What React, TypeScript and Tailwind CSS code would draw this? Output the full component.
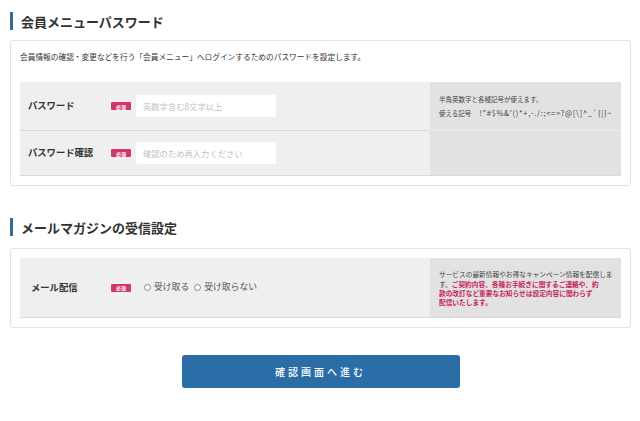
import React from "react";

const FONT = "font-['Noto_Sans_CJK_JP','Noto_Sans',sans-serif]";

function SectionHeading({ children, className = "" }: { children: React.ReactNode; className?: string }) {
  return (
    <h2
      className={`flex h-[18px] items-center border-l-[3px] border-[#2f6c9b] pl-[8px] text-[13px] font-bold leading-none text-[#333] ${className}`}
    >
      {children}
    </h2>
  );
}

function Required() {
  return (
    <span className="flex h-[8px] w-[20px] shrink-0 items-center justify-center rounded-[1px] bg-[#cf366a] text-[5px] font-bold leading-none text-white">
      必須
    </span>
  );
}

function TextField({ placeholder }: { placeholder: string }) {
  return (
    <div className="ml-[5px] flex h-[22px] w-[140px] items-center rounded-[2px] bg-white pl-[7px] text-[8.3px] leading-none text-[#c2c2c2]">
      {placeholder}
    </div>
  );
}

function Radio({ label }: { label: string }) {
  return (
    <span className="flex items-center gap-[3px] text-[8.8px] leading-none text-[#555]">
      <span className="h-[7px] w-[7px] rounded-full border border-[#888] bg-white" />
      {label}
    </span>
  );
}

export default function App() {
  return (
    <div className={`h-[421px] w-[640px] bg-white ${FONT}`}>
      <div className="pl-[10px] pr-[9px] pt-[12px]">
        {/* Member menu password */}
        <SectionHeading>会員メニューパスワード</SectionHeading>
        <div className="mt-[10px] rounded-[3px] border border-[#e3e3e3] px-[9px] pb-[9px] pt-[11px]">
          <p className="text-[7.7px] leading-[10px] text-[#333]">
            会員情報の確認・変更などを行う「会員メニュー」へログインするためのパスワードを設定します。
          </p>
          <div className="mt-[20px] grid grid-cols-[410px_191px]">
            <div className="flex h-[49px] items-center border-b border-[#d9d9d9] bg-[#efefef] pl-[8px]">
              <span className="w-[83px] text-[9.3px] font-bold text-[#333]">パスワード</span>
              <Required />
              <TextField placeholder="英数字含む8文字以上" />
            </div>
            <div className="flex h-[49px] flex-col justify-center border-b border-[#ececec] bg-[#e2e2e2] pl-[9px] text-[6.5px] leading-[14px] text-[#444]">
              <span>半角英数字と各種記号が使えます。</span>
              <span className="whitespace-nowrap">
                使える記号
                <span className="ml-[8px] text-[7.5px] tracking-[0.7px]">{"!\"#$%&'()*+,-./:;<=>?@[\\]^_`{|}~"}</span>
              </span>
            </div>
            <div className="flex h-[45px] items-center border-b border-[#dadada] bg-[#efefef] pl-[8px]">
              <span className="w-[83px] text-[9.3px] font-bold text-[#333]">パスワード確認</span>
              <Required />
              <TextField placeholder="確認のため再入力ください" />
            </div>
            <div className="h-[45px] border-b border-[#dadada] bg-[#e2e2e2]" />
          </div>
        </div>

        {/* Mail magazine */}
        <SectionHeading className="mt-[32px]">メールマガジンの受信設定</SectionHeading>
        <div className="mt-[12px] rounded-[3px] border border-[#e3e3e3] px-[9px] py-[9px]">
          <div className="grid grid-cols-[410px_191px]">
            <div className="flex h-[60px] items-center border-b border-[#d9d9d9] bg-[#efefef] pl-[11px]">
              <span className="w-[80px] text-[9.3px] font-bold text-[#333]">メール配信</span>
              <Required />
              <div className="ml-[13px] flex items-center gap-[5px]">
                <Radio label="受け取る" />
                <Radio label="受け取らない" />
              </div>
            </div>
            <div className="flex h-[60px] flex-col justify-center border-b border-[#d9d9d9] bg-[#e2e2e2] pl-[9px] pt-[3px] text-[6.7px] leading-[9.4px] text-[#444]">
              <p className="whitespace-nowrap">
                サービスの最新情報やお得なキャンペーン情報を配信しま
                <br />
                す。
                <span className="font-bold text-[#c8245c]">ご契約内容、各種お手続きに関するご連絡や、約</span>
                <br />
                <span className="font-bold text-[#c8245c]">款の改訂など重要なお知らせは設定内容に関わらず</span>
                <br />
                <span className="font-bold text-[#c8245c]">配信いたします。</span>
              </p>
            </div>
          </div>
        </div>

        <button
          type="button"
          className="mx-auto mt-[27px] flex h-[33px] w-[278px] items-center justify-center rounded-[3px] bg-[#2b6da6] text-[10px] font-medium tracking-[3px] text-white"
        >
          確認画面へ進む
        </button>
      </div>
    </div>
  );
}
